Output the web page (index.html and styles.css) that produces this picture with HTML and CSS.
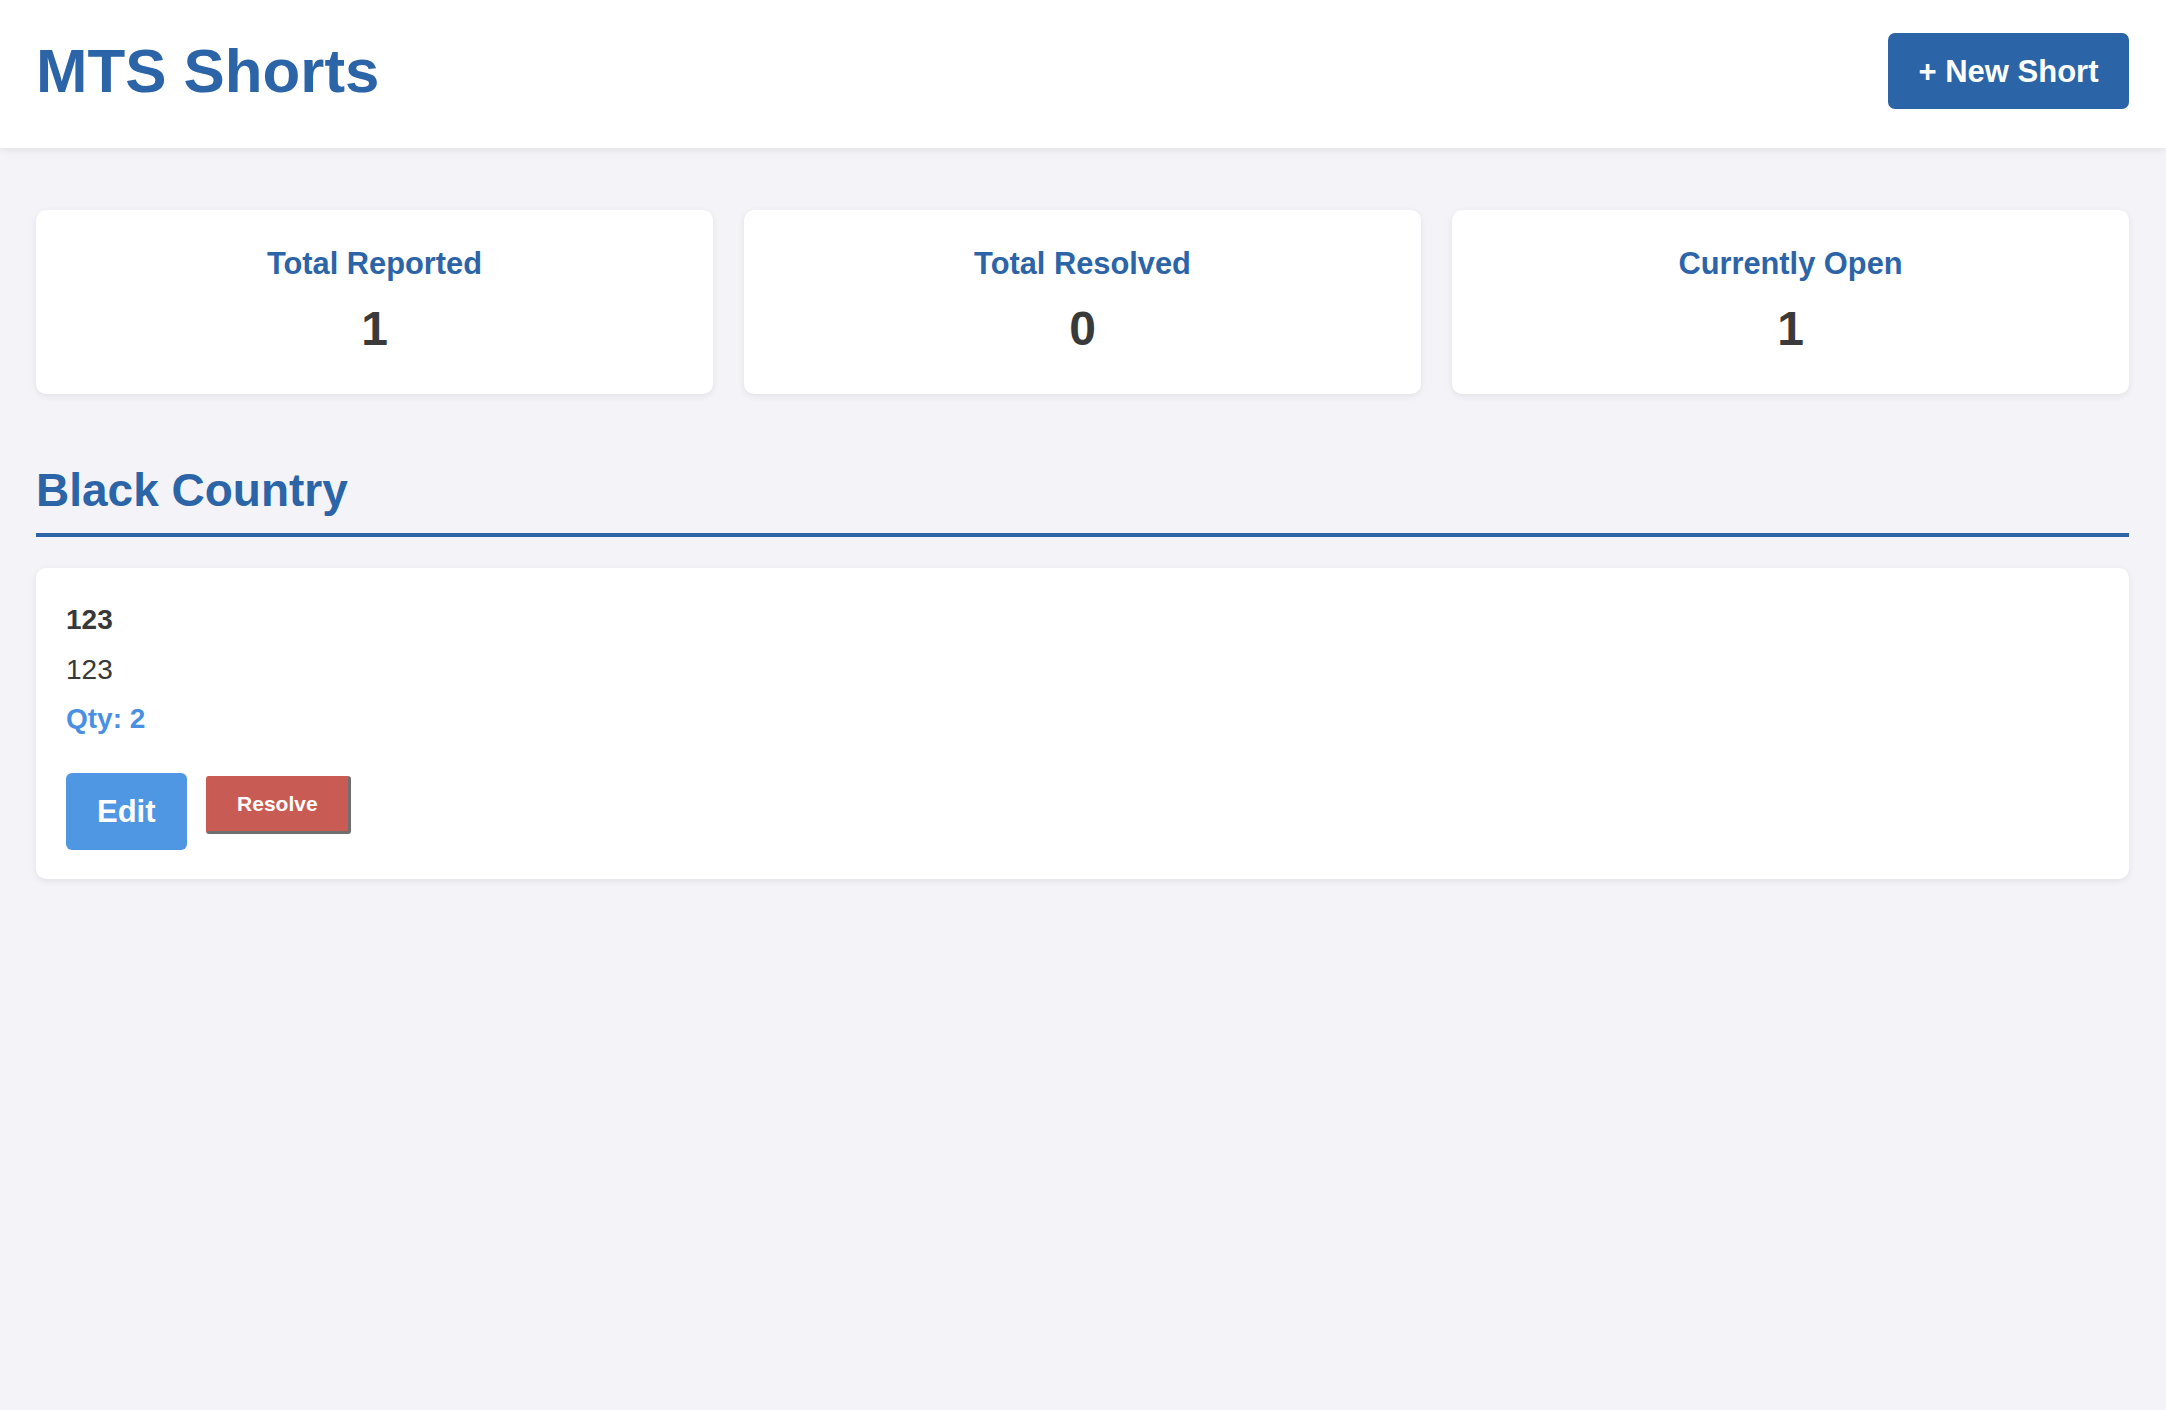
FILE: index.html
```html
<!DOCTYPE html>
<html lang="en">
<head>
<meta charset="utf-8">
<title>MTS Shorts</title>
<link rel="stylesheet" href="styles.css">
</head>
<body>
<header class="topbar">
  <h1 class="brand">MTS Shorts</h1>
  <button class="btn btn-primary" type="button">+ New Short</button>
</header>
<main class="content">
  <section class="stats">
    <div class="stat-card">
      <div class="stat-label">Total Reported</div>
      <div class="stat-value">1</div>
    </div>
    <div class="stat-card">
      <div class="stat-label">Total Resolved</div>
      <div class="stat-value">0</div>
    </div>
    <div class="stat-card">
      <div class="stat-label">Currently Open</div>
      <div class="stat-value">1</div>
    </div>
  </section>
  <section class="group">
    <h2 class="group-title">Black Country</h2>
    <div class="item-card">
      <div class="item-line item-title">123</div>
      <div class="item-line item-desc">123</div>
      <div class="item-line item-qty">Qty: 2</div>
      <div class="item-actions">
        <button class="btn btn-edit" type="button">Edit</button>
        <button class="btn-resolve" type="button">Resolve</button>
      </div>
    </div>
  </section>
</main>
</body>
</html>
```
FILE: styles.css
```css
* {
  box-sizing: border-box;
}

html, body {
  margin: 0;
  padding: 0;
}

body {
  background: #f4f4f8;
  font-family: "Liberation Sans", Arial, sans-serif;
  color: #333333;
  min-height: 1410px;
}

.topbar {
  display: flex;
  justify-content: space-between;
  align-items: center;
  background: #ffffff;
  padding: 33px 37px 39px 36px;
  box-shadow: 0 2px 8px rgba(0, 0, 0, 0.08);
  position: relative;
}

.brand {
  margin: 0;
  font-size: 61.8px;
  line-height: 70px;
  font-weight: 700;
  color: #2c64a8;
}

.btn {
  font-family: "Liberation Sans", Arial, sans-serif;
  font-weight: 700;
  font-size: 31px;
  line-height: 35px;
  color: #ffffff;
  border: none;
  border-radius: 7px;
  cursor: pointer;
}

.btn-primary {
  background: #2c64a8;
  padding: 20.5px 30.5px;
}

.content {
  padding: 62px 37px 0 36px;
}

.stats {
  display: grid;
  grid-template-columns: repeat(3, 1fr);
  gap: 31px;
}

.stat-card {
  background: #ffffff;
  border-radius: 10px;
  box-shadow: 0 2px 7px rgba(0, 0, 0, 0.08);
  padding: 36px 20px 38px;
  text-align: center;
}

.stat-label {
  font-size: 30.8px;
  line-height: 35px;
  font-weight: 700;
  color: #2c64a8;
}

.stat-value {
  margin-top: 20px;
  font-size: 48px;
  line-height: 55px;
  font-weight: 700;
  color: #3a3a3a;
}

.group {
  margin-top: 70px;
}

.group-title {
  margin: 0 0 31px;
  font-size: 46px;
  line-height: 52px;
  font-weight: 700;
  color: #2c64a8;
  padding-bottom: 17px;
  border-bottom: 4px solid #2c64a8;
}

.item-card {
  background: #ffffff;
  border-radius: 10px;
  box-shadow: 0 2px 7px rgba(0, 0, 0, 0.08);
  padding: 36px 30px 29px;
}

.item-line {
  font-size: 28px;
  line-height: 32px;
  margin-bottom: 17.5px;
}

.item-title {
  font-weight: 700;
  color: #383838;
}

.item-desc {
  color: #383838;
}

.item-qty {
  font-weight: 700;
  color: #4a90e2;
  margin-bottom: 37.5px;
}

.item-actions {
  display: flex;
  align-items: flex-start;
  gap: 19px;
}

.btn-edit {
  background: #4f96e3;
  padding: 21px 31px;
  border-radius: 6px;
}

.btn-resolve {
  margin-top: 3px;
  font-family: "Liberation Sans", Arial, sans-serif;
  font-weight: 700;
  font-size: 21px;
  line-height: 24px;
  color: #ffffff;
  background: #c85c54;
  padding: 15px 30.5px;
  border-style: solid;
  border-width: 1px 3px 3px 1px;
  border-color: #c85c54 #6f6f6f #6f6f6f #c85c54;
  border-radius: 3px;
  cursor: pointer;
}
```
